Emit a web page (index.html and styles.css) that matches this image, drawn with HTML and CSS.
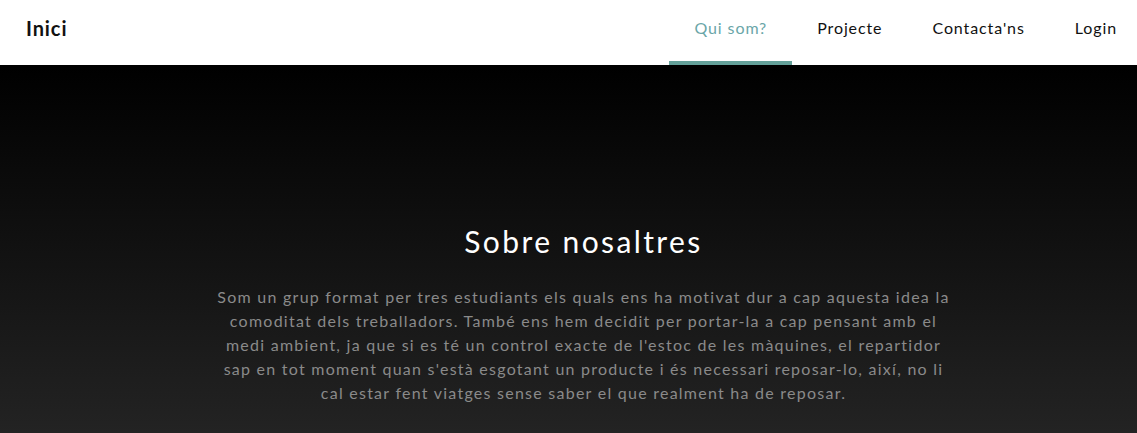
FILE: index.html
```html
<!DOCTYPE html>
<html lang="ca">
<head>
<meta charset="utf-8">
<title>Sobre nosaltres</title>
<link rel="stylesheet" href="styles.css">
</head>
<body>
<header class="topbar">
  <a class="brand" href="#">Inici</a>
  <nav class="nav">
    <a class="nav-link active" href="#">Qui som?</a>
    <a class="nav-link" href="#">Projecte</a>
    <a class="nav-link" href="#">Contacta'ns</a>
    <a class="nav-link" href="#">Login</a>
  </nav>
</header>
<section class="hero">
  <h1 class="hero-title">Sobre nosaltres</h1>
  <p class="hero-text">Som un grup format per tres estudiants els quals ens ha motivat dur a cap aquesta idea la comoditat dels treballadors. També ens hem decidit per portar-la a cap pensant amb el medi ambient, ja que si es té un control exacte de l'estoc de les màquines, el repartidor sap en tot moment quan s'està esgotant un producte i és necessari reposar-lo, així, no li cal estar fent viatges sense saber el que realment ha de reposar.</p>
</section>
</body>
</html>
```

FILE: styles.css
```css
* { box-sizing: border-box; }
html, body { margin: 0; padding: 0; }
body {
  font-family: "Lato", "Open Sans", sans-serif;
  background: #222;
  overflow: hidden;
}
.topbar {
  height: 65px;
  background: #fff;
  display: flex;
  align-items: stretch;
  justify-content: space-between;
  padding: 0 20px 0 26px;
}
.brand {
  display: flex;
  align-items: center;
  font-size: 20px;
  font-weight: 700;
  letter-spacing: 0.9px;
  color: #111;
  text-decoration: none;
  padding-bottom: 9px;
}
.nav {
  display: flex;
  align-items: stretch;
}
.nav-link {
  display: flex;
  align-items: center;
  padding: 0 25px 6px 25px;
  font-size: 16px;
  letter-spacing: 0.9px;
  color: #111;
  text-decoration: none;
  border-bottom: 4px solid transparent;
}
.nav-link:last-child { padding-right: 0; }
.nav-link.active {
  color: #6aa6a8;
  border-bottom-color: #64a19a;
}
.hero {
  height: 368px;
  background: linear-gradient(to bottom, #000 0%, #232323 100%);
  display: flex;
  flex-direction: column;
  align-items: center;
  padding: 152px 0 0 30px;
}
.hero-title {
  margin: 0;
  font-size: 30px;
  font-weight: 400;
  color: #fff;
  letter-spacing: 2.4px;
  line-height: 48px;
}
.hero-text {
  margin: 20px 0 0;
  max-width: 745px;
  text-align: center;
  font-size: 16px;
  line-height: 24px;
  letter-spacing: 1.25px;
  color: #8a8a8a;
}
```
